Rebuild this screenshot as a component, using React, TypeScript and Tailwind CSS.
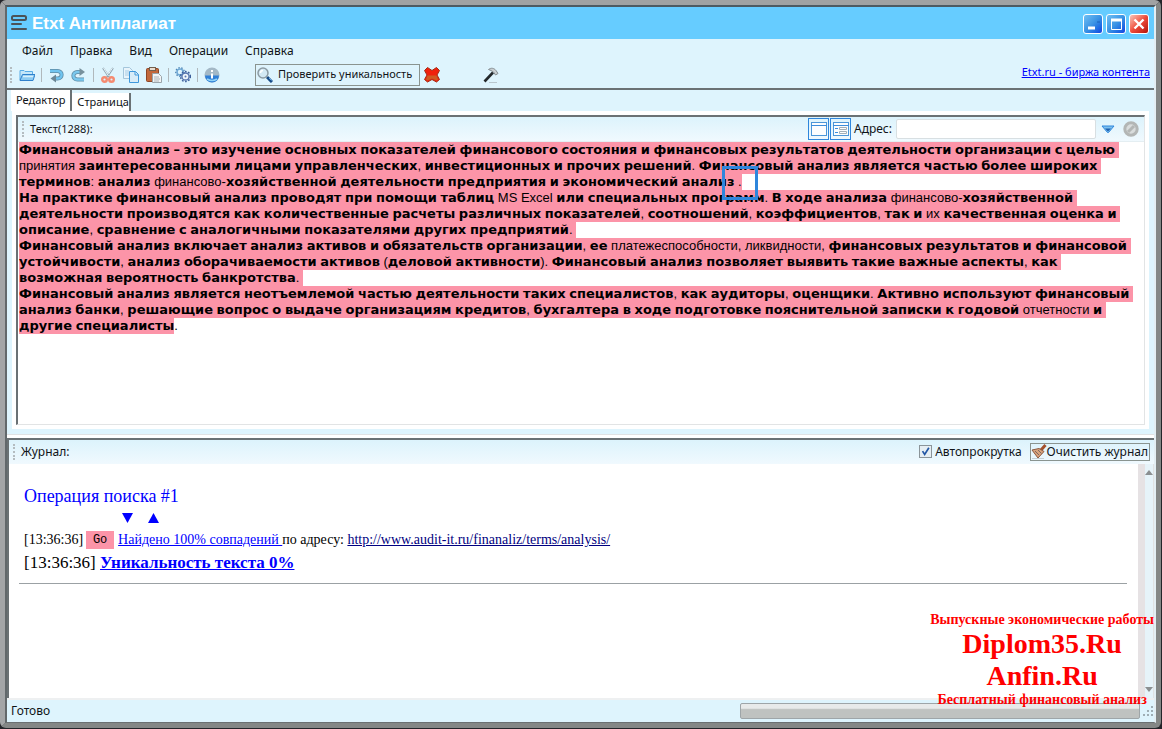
import { ReactNode, useState } from "react";

const MENU = ["Файл", "Правка", "Вид", "Операции", "Справка"];

// Words in braces, spaces and punctuation keep the regular weight.
const TEXT_LINES = [
  "Финансовый анализ – это изучение основных показателей финансового состояния и финансовых результатов деятельности организации с целью ",
  "{принятия} заинтересованными лицами управленческих, инвестиционных и прочих решений. Финансовый анализ является частью более широких ",
  "терминов: анализ {финансово-}хозяйственной деятельности предприятия и экономический анализ .",
  "На практике финансовый анализ проводят при помощи таблиц {MS Excel} или специальных программ. В ходе анализа {финансово-}хозяйственной ",
  "деятельности производятся как количественные расчеты различных показателей, соотношений, коэффициентов, так и {их} качественная оценка и ",
  "описание, сравнение с аналогичными показателями других предприятий. ",
  "Финансовый анализ включает анализ активов и обязательств организации, ее {платежеспособности, ликвидности,} финансовых результатов и финансовой ",
  "устойчивости, анализ оборачиваемости активов (деловой активности). Финансовый анализ позволяет выявить такие важные аспекты, как ",
  "возможная вероятность банкротства. ",
  "Финансовый анализ является неотъемлемой частью деятельности таких специалистов, как аудиторы, оценщики. Активно используют финансовый ",
  "анализ банки, решающие вопрос о выдаче организациям кредитов, бухгалтера в ходе подготовке пояснительной записки к годовой {отчетности} и ",
  "другие специалисты",
];

function TextLine({ text, tail }: { text: string; tail?: string }) {
  const parts = text.split(/(\{[^}]+\}|[.,:()\s]+)/);
  return (
    <div className="flex h-4 whitespace-pre">
      <mark className="h-4 bg-[#fc94a8] text-black">
        {parts.map((part, i) =>
          i % 2 === 0 ? (
            <b key={i} className="font-['DejaVu_Sans',sans-serif]">
              {part}
            </b>
          ) : (
            <span key={i}>{part.replace(/[{}]/g, "")}</span>
          )
        )}
      </mark>
      {tail}
    </div>
  );
}

function Grip() {
  return <span className="h-4 w-0 border-l-2 border-dotted border-[#b4bcc0]" />;
}

function Separator() {
  return (
    <span className="flex w-[6px] justify-center">
      <span className="h-[14px] w-px bg-[#b0b8bc]" />
    </span>
  );
}

function ToolButton({ label, children }: { label: string; children: ReactNode }) {
  return (
    <button aria-label={label} title={label} className="flex h-[22px] w-[23px] items-center justify-center">
      <svg viewBox="0 0 16 16" className="h-4 w-4" fill="none">
        {children}
      </svg>
    </button>
  );
}

function TitleBar() {
  return (
    <header className="flex h-8 items-center bg-[#66ccff] pr-[5px] pl-1">
      <svg viewBox="0 0 16 16" className="h-4 w-4" fill="none" stroke="#4b5358" strokeWidth="2">
        <rect x="1" y="1" width="14" height="4" rx="1.5" />
        <path d="M1 9h9M1 14h14" strokeLinecap="round" />
      </svg>
      <h1 className="ml-[5px] flex-1 pt-[2px] font-['Liberation_Sans',sans-serif] text-[17px] font-bold text-white">
        Etxt Антиплагиат
      </h1>
      <div className="flex gap-[3px] pt-[2px]">
        <button
          aria-label="Свернуть"
          className="h-5 w-5 rounded-[3px] border border-white bg-linear-to-br from-[#6fc0f4] via-[#3b93e4] to-[#1a3fe0]"
        >
          <svg viewBox="0 0 18 18" fill="none">
            <path d="M4 13h7" stroke="#fff" strokeWidth="3" />
            <path d="M13 7h3" stroke="#1d62b8" />
          </svg>
        </button>
        <button
          aria-label="Развернуть"
          className="h-5 w-5 rounded-[3px] border border-white bg-linear-to-br from-[#6fc0f4] via-[#3b93e4] to-[#1a3fe0]"
        >
          <svg viewBox="0 0 18 18" fill="none" stroke="#fff">
            <path d="M4.500 5v9.500h10V5" />
            <path d="M4 5h11" strokeWidth="3" />
          </svg>
        </button>
        <button
          aria-label="Закрыть"
          className="h-5 w-5 rounded-[3px] border border-white bg-linear-to-br from-[#f3c3bb] via-[#ee4a3a] to-[#b30d04]"
        >
          <svg viewBox="0 0 18 18" fill="none">
            <path d="M4.500 4.500l9 9M13.500 4.500l-9 9" stroke="#fff" strokeWidth="2.400" />
          </svg>
        </button>
      </div>
    </header>
  );
}

function Toolbar() {
  return (
    <div className="flex h-[25px] items-center pr-1 pb-[2px] pl-[3px]">
      <Grip />
      <div className="ml-[3px] flex items-center">
        <ToolButton label="Открыть">
          <path d="M1 13V3.500h4l1 1h7.500V7" fill="#c3e6f9" stroke="#58ace6" />
          <path d="M1 13.500l2.500-6H16l-2 6z" fill="#8ccbf2" stroke="#2f80cc" />
          <path d="M4 9.500h10" stroke="#d8f0fc" strokeWidth="1.500" />
        </ToolButton>
        <Separator />
        <ToolButton label="Отменить">
          <path d="M2 4h7.500c5.500 0 5.500 7.500 0 7.500H7" stroke="#5e8ba5" strokeWidth="4" />
          <path d="M2 4h7.500c5.500 0 5.500 7.500 0 7.500H7" stroke="#6fc4f0" strokeWidth="2.400" />
          <path d="M8 7.500v8L2.500 11.500z" fill="#6b8797" />
        </ToolButton>
        <ToolButton label="Повторить">
          <path d="M13 12.500H6.500c-5.500 0-5.500-7.500 0-7.500H9" stroke="#5e8ba5" strokeWidth="4" />
          <path d="M13 12.500H6.500c-5.500 0-5.500-7.500 0-7.500H9" stroke="#79c8ee" strokeWidth="2.400" />
          <path d="M8.500 1v8L14 5z" fill="#78919d" />
        </ToolButton>
        <Separator />
        <ToolButton label="Вырезать">
          <path d="M3 1l6 9M13 1L7 10" stroke="#8fa6b3" strokeWidth="2" />
          <path d="M3.500 1l5 8M12.500 1l-4 6" stroke="#e9f3f8" />
          <circle cx="4.500" cy="12.500" r="2.300" stroke="#f58a70" strokeWidth="2.400" />
          <circle cx="11.500" cy="12.500" r="2.300" stroke="#f58a70" strokeWidth="2.400" />
        </ToolButton>
        <ToolButton label="Копировать">
          <path d="M.5.5h6l3 3v8h-9z" fill="#e8f4fb" stroke="#a4c6dc" />
          <path d="M2 4h4M2 6h4M2 8h4" stroke="#a5cce6" />
          <path d="M6.500 4.500h6l3 3v8h-9z" fill="#d8ecf8" stroke="#3f98dc" />
          <path d="M12 4.500V8h3.500" stroke="#3f98dc" />
        </ToolButton>
        <ToolButton label="Вставить">
          <rect x=".5" y="1.500" width="12" height="13" rx="1" fill="#c2683c" stroke="#8d4525" />
          <rect x="3.500" y=".5" width="6" height="3" fill="#e9dccf" stroke="#73604f" />
          <path d="M6.500 6.500h6l3 3v6h-9z" fill="#f3f5f6" stroke="#9aa5ab" />
          <path d="M8 10h5M8 12h6M8 14h5" stroke="#aab3b8" />
        </ToolButton>
        <Separator />
        <ToolButton label="Настройки">
          <circle cx="5" cy="5" r="3" stroke="#6fa9d6" strokeWidth="1.500" />
          <circle cx="5" cy="5" r="4.300" stroke="#4d84b4" strokeWidth="1.200" strokeDasharray="1.500 1.500" />
          <circle cx="10.500" cy="9.500" r="3.600" fill="#eef7fc" stroke="#5877b0" strokeWidth="1.500" />
          <circle cx="10.500" cy="9.500" r="5" stroke="#3c5f9c" strokeWidth="1.400" strokeDasharray="1.700 1.500" />
          <circle cx="10.500" cy="9.500" r="1" fill="#5877b0" />
        </ToolButton>
        <Separator />
        <ToolButton label="Информация">
          <circle cx="8" cy="8" r="7.500" fill="#a3b8c6" />
          <path d="M1 8.500h14a7 7 0 01-14 0z" fill="#2f7fd6" />
          <path d="M3 12q5 3 10 0" stroke="#8fd2f8" strokeWidth="1.500" />
          <path d="M8 3v2M8 6.500v5" stroke="#fff" strokeWidth="2" />
        </ToolButton>
      </div>
      <button className="ml-8 flex h-[22px] items-center gap-[5px] border border-[#8a9490] pr-[7px] pl-px text-[11px]">
        <svg viewBox="0 0 16 16" className="h-4 w-4" fill="none">
          <path d="M10 10l5 5" stroke="#164a86" strokeWidth="3" />
          <path d="M12 11l2.500 2.500" stroke="#5fa8e8" />
          <circle cx="6" cy="6" r="5" fill="#d3e9f4" stroke="#8c9ba3" strokeWidth="1.500" />
          <path d="M3.500 6a2.500 2.500 0 012.500-2.500" stroke="#fff" strokeWidth="1.500" />
        </svg>
        Проверить уникальность
      </button>
      <ToolButton label="Остановить">
        <path
          d="M3.500.5L8 3.500l4.500-3 3 3L13 8l2.500 4.500-3 2.500L8 12.500 3.500 15l-3-2.500L3 8 .5 3.500z"
          fill="#f0200c"
          stroke="#a52a12"
        />
        <path d="M3.500 8.500h9l1.500 4-1.500 1L8 11.500l-4.500 2-1.500-1z" fill="#cf5a22" />
      </ToolButton>
      <div className="ml-9">
        <ToolButton label="Инструменты">
          <path d="M1.500 14.500L10 5.500" stroke="#23282b" strokeWidth="2.600" />
          <path d="M5.500 2.500C8 .5 11 1 13 3.500l2 3-2.500 1.500-2-3L8 3.500z" fill="#c9cfd2" stroke="#848c90" />
          <path d="M6 15.500h8" stroke="#b9c7ce" />
        </ToolButton>
      </div>
      <a href="#" className="ml-auto pb-1 text-[11px] text-[#0000ff] underline">
        Etxt.ru - биржа контента
      </a>
    </div>
  );
}

function Editor() {
  const [url, setUrl] = useState("");
  return (
    <section className="flex min-h-0 flex-[346] flex-col border-t-2 border-[#6a7174] pr-[5px]">
      <div role="tablist" className="flex h-[21px] items-end pl-1 text-[11px]">
        <button
          role="tab"
          aria-selected="true"
          className="h-[21px] border-r-2 border-[#6a7174] bg-white px-[5px]"
        >
          Редактор
        </button>
        <button role="tab" aria-selected="false" className="h-[18px] border-r-2 border-[#6a7174] bg-white pl-[5px]">
          Страница
        </button>
      </div>
      <div className="mb-[5px] ml-[5px] flex min-h-0 flex-1 flex-col border-4 border-white">
        <div className="flex min-h-0 flex-1 flex-col border-t-2 border-r border-b border-l-2 border-t-[#6a7174] border-r-[#e2e4e5] border-b-[#e2e4e5] border-l-[#6a7174] bg-white">
          <div className="flex h-[25px] items-center border-b border-[#e4eef2] bg-linear-to-b from-[#dcf3fc] to-[#f0f9fe] pr-[5px] pl-1 text-[12px]">
            <Grip />
            <span className="ml-[6px] flex-1 text-[11px]">Текст(1288):</span>
            <button aria-label="Одно окно" className="flex h-[22px] w-[21px] items-center justify-center border border-[#2f86dc]">
              <svg viewBox="0 0 16 14" className="h-[14px] w-4 shrink-0" fill="none">
                <rect x=".5" y=".5" width="15" height="13" fill="#fbfdfe" stroke="#4b96d8" />
                <path d="M0 3.500h16" stroke="#3b8ddb" />
              </svg>
            </button>
            <button
              aria-label="Форма"
              className="ml-px flex h-[22px] w-[21px] items-center justify-center border border-[#2f86dc]"
            >
              <svg viewBox="0 0 16 14" className="h-[14px] w-4 shrink-0" fill="none">
                <rect x=".5" y=".5" width="15" height="13" fill="#fbfdfe" stroke="#4b96d8" />
                <path d="M0 3.500h16" stroke="#3b8ddb" />
                <path d="M2 6.500h3M2 10.500h3" stroke="#3b8ddb" />
                <path d="M6.500 5.500h7v2h-7zM6.500 9.500h7v2h-7z" stroke="#a3afb6" />
              </svg>
            </button>
            <label htmlFor="address" className="ml-[3px]">
              Адрес:
            </label>
            <input
              id="address"
              value={url}
              onChange={(e) => setUrl(e.target.value)}
              className="ml-1 h-5 w-[200px] rounded-[2px] border border-[#d8dfe2] bg-white px-1 outline-none"
            />
            <button aria-label="Показать список" className="ml-[5px]">
              <svg viewBox="0 0 14 9" className="h-[9px] w-[14px]" fill="none">
                <path d="M1 1h12L7.500 7.500h-1z" fill="#7cc0ee" stroke="#2f86dc" />
                <path d="M4 3.500h6L7 6.500z" fill="#1d5fae" />
              </svg>
            </button>
            <button aria-label="Отмена загрузки" className="ml-2">
              <svg viewBox="0 0 16 16" className="h-4 w-4" fill="none">
                <circle cx="8" cy="8" r="6.200" fill="#d9dcdc" stroke="#b3b6b5" strokeWidth="3" />
                <path d="M5 11l6-6" stroke="#b3b6b5" strokeWidth="3" />
              </svg>
            </button>
          </div>
          <div className="relative min-h-0 flex-1 overflow-hidden pl-px font-['Liberation_Sans',sans-serif] text-[13px] leading-4 text-black">
            {TEXT_LINES.map((line, i) => (
              <TextLine key={i} text={line} tail={i === TEXT_LINES.length - 1 ? "." : undefined} />
            ))}
            <span className="absolute top-[24px] left-[704px] h-[34px] w-9 border-3 border-[#2f86dc]" />
          </div>
        </div>
      </div>
    </section>
  );
}

function Journal() {
  const [autoScroll, setAutoScroll] = useState(true);
  return (
    <section className="flex min-h-0 flex-[260] flex-col border-t-2 border-l-2 border-[#6a7174] bg-white">
      <div className="flex h-6 items-center bg-linear-to-b from-[#dcf3fc] to-[#f0f9fe] pr-1 pl-1 text-[12px]">
        <Grip />
        <h2 className="ml-[6px] flex-1">Журнал:</h2>
        <label className="mr-2 flex items-center gap-[3px]">
          <input
            type="checkbox"
            checked={autoScroll}
            onChange={(e) => setAutoScroll(e.target.checked)}
            className="peer sr-only"
          />
          <svg
            viewBox="0 0 13 13"
            className="h-[13px] w-[13px] border border-[#8b9499] bg-[#e6eef3] [&>path]:opacity-0 peer-checked:[&>path]:opacity-100"
            fill="none"
          >
            <path d="M3 6l2.500 4L10.500 2" stroke="#2357a5" strokeWidth="2" />
          </svg>
          Автопрокрутка
        </label>
        <button className="flex h-[18px] items-center border border-[#8a9490] pr-px">
          <svg viewBox="0 0 16 16" className="h-4 w-4" fill="none">
            <path d="M10 6l4.500-5" stroke="#a4502c" strokeWidth="3" />
            <path d="M1 6l7-1.500 5 3L7 14z" fill="#d9a27c" stroke="#8d5a40" />
            <path d="M4 7l4 4M7 6l3.500 3.500" stroke="#7e6a60" />
            <path d="M1 14.500h12" stroke="#c5ced3" />
          </svg>
          Очистить журнал
        </button>
      </div>
      <div className="flex min-h-0 flex-1">
        <div className="min-w-0 flex-1 pt-[21px] pr-[11px] pl-[10px] font-['Liberation_Serif',serif] text-[14px]">
          <div className="pl-[5px]">
            <h3 className="text-[18px] leading-[22px] text-[#0000ff]">Операция поиска #1</h3>
            <div className="flex h-[22px] items-center gap-[15px] pl-[98px]">
              <button aria-label="Вниз">
                <svg viewBox="0 0 11 10" className="h-[10px] w-[11px]" fill="#0000ff">
                  <path d="M0 0h11L5.500 10z" />
                </svg>
              </button>
              <button aria-label="Вверх">
                <svg viewBox="0 0 11 10" className="h-[10px] w-[11px]" fill="#0000ff">
                  <path d="M0 10h11L5.500 0z" />
                </svg>
              </button>
            </div>
            <p className="flex h-[22px] items-center whitespace-pre text-black">
              [13:36:36]
              <button className="mr-1 ml-[3px] h-[18px] w-7 bg-[#fc94a8] font-['Liberation_Mono',monospace] text-[12px] leading-[18px]">
                Go
              </button>
              <a href="#" className="text-[#0000ff] underline">
                {"Найдено 100% совпадений "}
              </a>
              {"по адресу: "}
              <a href="#" className="text-[#000080] underline">
                http://www.audit-it.ru/finanaliz/terms/analysis/
              </a>
            </p>
            <p className="text-[17px] leading-[24px] text-black">
              [13:36:36]{" "}
              <a href="#" className="font-bold text-[#0000ff] underline">
                Уникальность текста 0%
              </a>
            </p>
          </div>
          <hr className="mt-2 border-[#9ba1a4]" />
        </div>
        <div className="flex w-4 flex-col items-center justify-between border-r border-l-[7px] border-r-[#e0e2e3] border-l-[#e6e2e4] bg-[#e6f3f9] py-[6px]">
          <svg viewBox="0 0 8 5" className="h-[5px] w-2" fill="#8b8f91">
            <path d="M0 5h8L4 0z" />
          </svg>
          <svg viewBox="0 0 8 5" className="h-[5px] w-2" fill="#8b8f91">
            <path d="M0 0h8L4 5z" />
          </svg>
        </div>
      </div>
    </section>
  );
}

function StatusBar() {
  return (
    <footer className="flex h-6 items-center justify-between border-t-2 border-[#eef0f1] pl-1 text-[12px]">
      <span>Готово</span>
      <div className="flex items-center gap-[3px]">
        <div
          role="progressbar"
          aria-valuenow={0}
          aria-label="Ход выполнения"
          className="h-4 w-[400px] rounded-[2px] border border-[#9ea5a8] bg-linear-to-b from-[#e8eaea] from-30% to-[#bfc2c0] to-40%"
        />
        <svg viewBox="0 0 11 11" className="h-[11px] w-[11px]" fill="#9faeb5">
          <path d="M8 0h2v2H8zM4 4h2v2H4zM8 4h2v2H8zM0 8h2v2H0zM4 8h2v2H4zM8 8h2v2H8z" />
        </svg>
      </div>
    </footer>
  );
}

export default function App() {
  return (
    <div className="h-screen min-h-[600px] bg-[#24252a] pr-px pb-px font-['Noto_Sans','Open_Sans',sans-serif] text-[#101418]">
      <div className="flex h-full flex-col rounded-[6px] border-[5px] border-t-[#a0a2a3] border-r-[#848786] border-b-[#848786] border-l-[#a3a5a7]">
        <div className="relative flex min-h-0 flex-1 flex-col border-2 border-b border-t-[#4d5a62] border-r-[#e3eef3] border-b-[#6b7072] border-l-[#62686b] bg-[#def4fd]">
          <TitleBar />
          <nav className="flex h-6 items-center gap-[17px] pl-[15px] text-[12px]">
            {MENU.map((item) => (
              <button key={item}>{item}</button>
            ))}
          </nav>
          <Toolbar />
          <Editor />
          <div className="h-1 border-t border-[#e0e2e3] bg-white" />
          <Journal />
          <StatusBar />
          {/* site stamp over the lower right corner */}
          <div className="absolute right-0 bottom-[14px] text-center font-['Liberation_Serif',serif] text-[14px] font-bold text-[#ff0000]">
            <p className="leading-4">Выпускные экономические работы</p>
            <p className="text-[28px] leading-8">Diplom35.Ru</p>
            <p className="text-[28px] leading-8">Anfin.Ru</p>
            <p className="leading-4">Бесплатный финансовый анализ</p>
          </div>
        </div>
      </div>
    </div>
  );
}
